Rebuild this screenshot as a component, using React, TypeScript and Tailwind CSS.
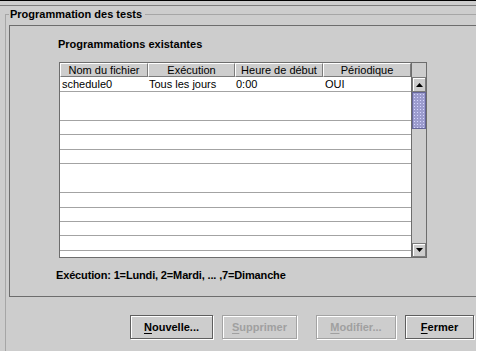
import React from "react";

const rowHeights = [
  "h-[15px] border-b",
  "h-[29px] border-b",
  "h-[14px] border-b",
  "h-[15px] border-b",
  "h-[14px] border-b",
  "h-[29px] border-b",
  "h-[15px] border-b",
  "h-[14px] border-b",
  "h-[14px] border-b",
  "h-[15px] border-b",
  "h-[6px]",
];

const headers = [
  { label: "Nom du fichier", w: "w-[88px]" },
  { label: "Exécution", w: "w-[87px]" },
  { label: "Heure de début", w: "w-[88px]" },
  { label: "Périodique", w: "w-[88px]" },
];

function Btn({
  first,
  rest,
  w,
  disabled,
  cls,
}: {
  first: string;
  rest: string;
  w: string;
  disabled?: boolean;
  cls?: string;
}) {
  return (
    <div
      className={`${w} ${cls ?? ""} h-[24px] flex items-center justify-center border ${
        disabled ? "border-[#a3a3a3] text-[#a0a0a0]" : "border-[#5f5f5f] text-black"
      } shadow-[inset_1px_1px_0_#ffffff,1px_1px_0_#ffffff] text-[11px] leading-[13px] font-bold`}
    >
      <span>
        <span className="underline underline-offset-2">{first}</span>
        {rest}
      </span>
    </div>
  );
}

export default function App() {
  return (
    <div className="w-[481px] h-[356px] bg-white font-['Liberation_Sans',Arial,sans-serif] text-black">
      <div className="w-[476px] h-[351px] bg-[#cdcdcd] border-t border-black flex flex-col">
        <div className="h-[4px]" />
        <div className="h-px bg-[#7d7d7d]" />
        <div className="h-[2px]" />
        {/* group box */}
        <div className="pl-[5px] flex flex-col">
          <div className="h-[13px] flex">
            <div className="w-[4px] h-[7px] self-end border-l border-t border-[#a6a6a6]" />
            <div className="px-[1px] text-[11px] leading-[13px] font-bold whitespace-nowrap">
              Programmation des tests
            </div>
            <div className="flex-1 h-[7px] self-end border-t border-[#a6a6a6] ml-[2px]" />
          </div>
          <div className="border-l border-[#a6a6a6] flex flex-col">
            <div className="h-[4px]" />
            <div className="ml-[3px] h-[272px] border-l border-t border-b border-[#6d6d6d] flex flex-col">
              <div className="mt-[12px] ml-[48px] h-[13px] text-[11px] leading-[13px] font-bold">
                Programmations existantes
              </div>
              <div className="mt-[11px] ml-[49px] w-[368px] h-[196px] border border-[#6d6d6d] flex bg-white">
                <div className="w-[351px] flex flex-col">
                  <div className="h-[14px] flex bg-[#cdcdcd]">
                    {headers.map((h) => (
                      <div
                        key={h.label}
                        className={`${h.w} h-[14px] flex items-center justify-center border-l border-t border-r border-b border-l-white border-t-white border-r-[#7b7b7b] border-b-[#7b7b7b] text-[11px] leading-[12px] whitespace-nowrap`}
                      >
                        {h.label}
                      </div>
                    ))}
                  </div>
                  {rowHeights.map((cls, i) => (
                    <div key={i} className={`${cls} border-[#a3a3a3] flex text-[11px] leading-[14px]`}>
                      {i === 0 && (
                        <>
                          <div className="w-[88px] pl-[2px] whitespace-nowrap">schedule0</div>
                          <div className="w-[87px] pl-[1px] whitespace-nowrap">Tous les jours</div>
                          <div className="w-[88px] pl-[1px] whitespace-nowrap">0:00</div>
                          <div className="w-[88px] pl-[2px] whitespace-nowrap">OUI</div>
                        </>
                      )}
                    </div>
                  ))}
                </div>
                <div className="w-[15px] border-l border-[#6d6d6d] flex flex-col bg-[#cdcdcd]">
                  <div className="h-[14px]" />
                  <div className="h-[15px] border border-[#7b7b7b] shadow-[inset_1px_1px_0_#ffffff] flex items-center justify-center">
                    <svg width="7" height="4" viewBox="0 0 7 4">
                      <path d="M3.5 0 L7 4 L0 4 Z" fill="#000" />
                    </svg>
                  </div>
                  <div className="h-[37px] border border-[#66669a] bg-[#9c9cce] bg-[radial-gradient(circle,#d6d6ff_0.6px,transparent_0.8px)] bg-[length:3px_3px]" />
                  <div className="flex-1" />
                  <div className="h-[14px] border border-[#7b7b7b] shadow-[inset_1px_1px_0_#ffffff] flex items-center justify-center">
                    <svg width="7" height="4" viewBox="0 0 7 4">
                      <path d="M0 0 L7 0 L3.5 4 Z" fill="#000" />
                    </svg>
                  </div>
                </div>
              </div>
              <div className="mt-[11px] ml-[46px] h-[13px] text-[11px] leading-[13px] font-bold whitespace-nowrap tracking-[-0.15px]">
                Exécution: 1=Lundi, 2=Mardi, ... ,7=Dimanche
              </div>
            </div>
            <div className="h-[18px]" />
            <div className="flex h-[24px]">
              <Btn first="N" rest="ouvelle..." w="w-[83px]" cls="ml-[124px]" />
              <Btn first="S" rest="upprimer" w="w-[75px]" cls="ml-[9px]" disabled />
              <Btn first="M" rest="odifier..." w="w-[80px]" cls="ml-[19px]" disabled />
              <Btn first="F" rest="ermer" w="w-[69px]" cls="ml-[9px]" />
            </div>
            <div className="h-[12px]" />
          </div>
        </div>
      </div>
    </div>
  );
}
